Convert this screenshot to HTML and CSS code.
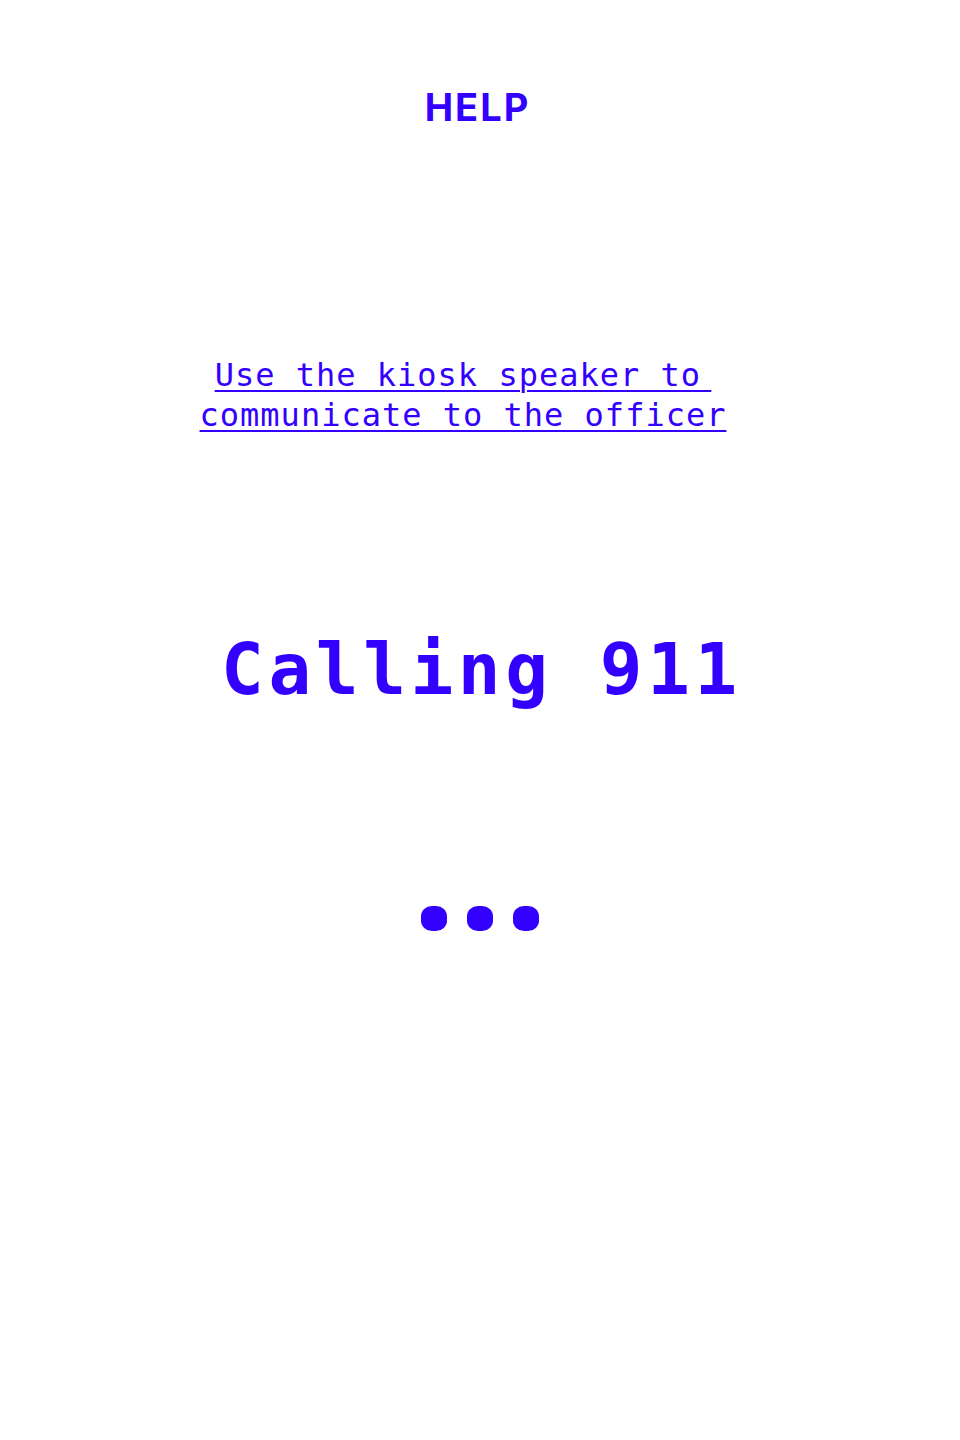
FILE: index.html
```html
<!DOCTYPE html>
<html lang="en">
<head>
<meta charset="utf-8">
<title>Help</title>
<link rel="stylesheet" href="styles.css">
</head>
<body>
<main class="screen">
  <h1 class="title">HELP</h1>
  <p class="hint"><a href="#" class="hint-link">Use the kiosk speaker to<span class="trail">&nbsp;</span><br>communicate to the officer</a></p>
  <h2 class="status">Calling 911</h2>
  <div class="dots" aria-label="loading">
    <span class="dot"></span>
    <span class="dot"></span>
    <span class="dot"></span>
  </div>
</main>
</body>
</html>
```
FILE: styles.css
```css
html, body {
  margin: 0;
  padding: 0;
  background: #ffffff;
}

.screen {
  width: 960px;
  min-height: 1440px;
  display: flex;
  flex-direction: column;
  align-items: center;
  color: #3300ff;
}

.title {
  margin: 84px 0 0 0;
  font-family: "Inter", "Liberation Sans", sans-serif;
  font-weight: 700;
  font-size: 38px;
  line-height: 46px;
  letter-spacing: 2px;
  padding-left: 3px;
  padding-right: 8px;
}

.hint {
  margin: 225px 0 0 0;
  padding-right: 34px;
  text-align: center;
  font-family: "DejaVu Sans Mono", "Liberation Mono", monospace;
  font-size: 32px;
  line-height: 40px;
  letter-spacing: 1px;
}

.hint-link {
  color: #3300ff;
  text-decoration: underline;
  text-decoration-thickness: 2px;
  text-underline-offset: 4px;
}

.trail {
  letter-spacing: -9px;
}

.status {
  margin: 195px 0 0 0;
  padding-left: 3px;
  font-family: "DejaVu Sans Mono", "Liberation Mono", monospace;
  font-weight: 700;
  font-size: 71px;
  line-height: 80px;
  letter-spacing: 4.6px;
}

.dots {
  margin-top: 196px;
  display: flex;
  gap: 20px;
}

.dot {
  width: 26px;
  height: 25px;
  border-radius: 42%;
  background: #3300ff;
}
```
